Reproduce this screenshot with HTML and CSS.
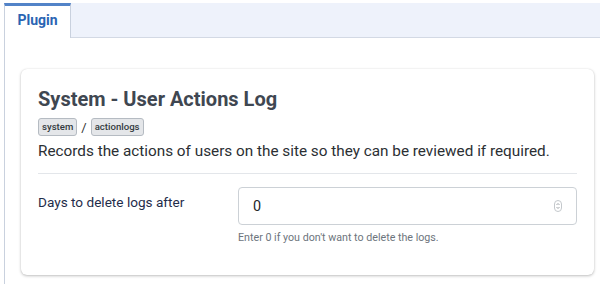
FILE: index.html
```html
<!DOCTYPE html>
<html>
<head>
<meta charset="utf-8">
<link rel="stylesheet" href="styles.css">
</head>
<body>
<div class="tabs">
  <div class="tablist">
    <div class="tab active">Plugin</div>
    <div class="tab-fill"></div>
  </div>
  <div class="tab-panel">
    <div class="card">
      <h2 class="title">System - User Actions Log</h2>
      <div class="badges">
        <span class="badge">system</span>
        <span class="sep">/</span>
        <span class="badge">actionlogs</span>
      </div>
      <p class="desc">Records the actions of users on the site so they can be reviewed if required.</p>
      <hr class="divider">
      <div class="field">
        <label class="label">Days to delete logs after</label>
        <div class="control">
          <div class="input">
            <span class="value">0</span>
            <svg class="spin" width="8" height="12" viewBox="0 0 8 12">
              <rect x="0.5" y="0.5" width="7" height="11" rx="3.5" fill="#fff" stroke="#c4c8cc"/>
              <path d="M2.5 5 L4 3.5 L5.5 5" fill="none" stroke="#8a9096" stroke-width="0.8"/>
              <path d="M2.5 7 L4 8.5 L5.5 7" fill="none" stroke="#8a9096" stroke-width="0.8"/>
            </svg>
          </div>
          <div class="help">Enter 0 if you don't want to delete the logs.</div>
        </div>
      </div>
    </div>
  </div>
</div>
</body>
</html>
```

FILE: styles.css
```css
* { box-sizing: border-box; }
html, body { margin: 0; padding: 0; background: #fff; }
body {
  font-family: Roboto, "Liberation Sans", sans-serif;
  color: #22262a;
  width: 600px;
  height: 284px;
  overflow: hidden;
}
.tabs {
  padding-left: 4px;
}
.tablist {
  display: flex;
  height: 35px;
  margin-top: 3px;
  background: #eef2fb;
  border-bottom: 1px solid #d3d9e4;
}
.tab {
  width: 67px;
  height: 35px;
  background: #fff;
  border-top: 3px solid #5283c8;
  border-left: 1px solid #c9d1de;
  border-right: 1px solid #c9d1de;
  color: #2a64b3;
  font-weight: 700;
  font-size: 14px;
  padding-top: 6px;
  text-align: center;
  position: relative;
  z-index: 1;
}
.tab-fill { flex: 1; }
.tab-panel {
  border-left: 1px solid #c9d1de;
  padding: 31px 6px 20px 16px;
  height: 246px;
}
.card {
  background: #fff;
  border-radius: 6px;
  box-shadow: 0 1px 3px rgba(0,0,0,0.25), 0 0 1px rgba(0,0,0,0.12);
  padding: 17px 17px 22px 17px;
  height: 206px;
}
.title {
  margin: 0;
  font-size: 20px;
  font-weight: 700;
  color: #3f4751;
  line-height: 26px;
}
.badges {
  display: flex;
  align-items: center;
  gap: 4px;
  margin-top: 6px;
}
.badge {
  font-size: 9.6px;
  font-weight: 500;
  color: #333a40;
  background: #e4e6e9;
  border: 1px solid #b5bbc2;
  border-radius: 3px;
  padding: 1px 3px;
  line-height: 14px;
}
.sep { font-size: 13px; color: #333; }
.desc {
  margin: 5px 0 0 0;
  font-size: 15.3px;
  line-height: 20px;
  color: #2b2f33;
}
.divider {
  margin: 12px 0 0 0;
  border: 0;
  border-top: 1px solid #e3e6ea;
}
.field {
  display: flex;
  margin-top: 13px;
}
.label {
  width: 200px;
  font-size: 13.6px;
  color: #1f2d4a;
  padding-top: 7px;
}
.control { flex: 1; }
.input {
  height: 38px;
  border: 1px solid #ccd1d6;
  border-radius: 4px;
  display: flex;
  align-items: center;
  justify-content: space-between;
  padding: 0 14px 0 14px;
  font-size: 14.4px;
  color: #22262a;
}
.spin { display: block; }
.help {
  margin-top: 6px;
  font-size: 10.7px;
  color: #6d757d;
}
```
